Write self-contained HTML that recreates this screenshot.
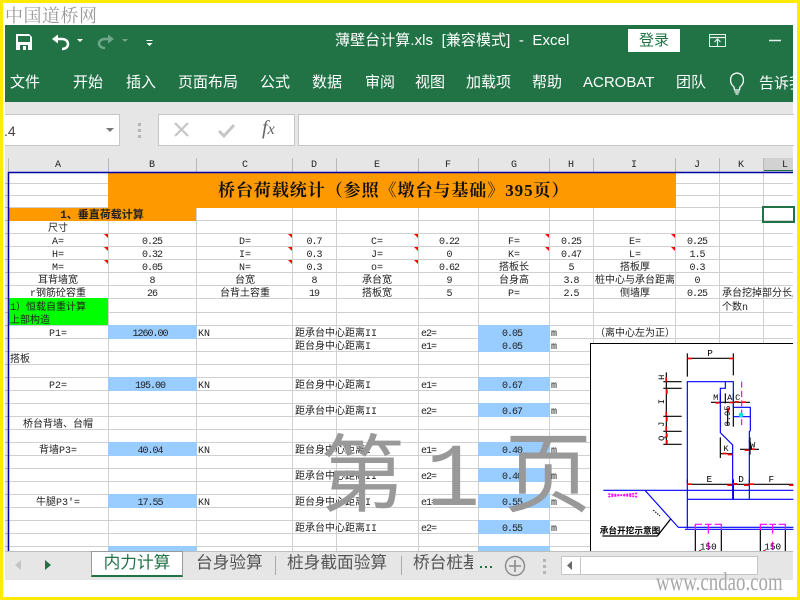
<!DOCTYPE html>
<html lang="zh"><head><meta charset="utf-8"><style>
html,body{margin:0;padding:0;background:#fff}
body{width:800px;height:600px;overflow:hidden;position:relative;font-family:"Liberation Sans","Noto Sans CJK SC",sans-serif}
.a{position:absolute;white-space:nowrap}
.m{color:#fff;font-size:15px;line-height:20px;top:73px}
svg{position:absolute;left:0;top:0}
.s text{font-family:"Liberation Mono","WenQuanYi Zen Hei","Noto Sans CJK SC",monospace;font-size:10px;fill:#222}
.s .c text{text-anchor:middle}
.s .n text,.s text.n{font-size:10px;letter-spacing:-1px}
</style></head><body>
<div class="a" style="left:5px;top:2px;font:18px 'Noto Serif CJK SC',serif;color:#999;letter-spacing:.5px">中国道桥网</div>
<div class="a" style="left:5px;top:25px;width:788px;height:77px;background:#217346"></div>
<div class="a" style="left:335px;top:31px;color:#fff;font-size:15px;line-height:20px;white-space:pre;letter-spacing:.07px">薄壁台计算.xls  [兼容模式]  -  Excel</div>
<div class="a" style="left:628px;top:29px;width:52px;height:23px;background:#fff;color:#217346;font-size:15px;line-height:23px;text-align:center">登录</div>
<div class="a m" style="left:10px">文件</div><div class="a m" style="left:73px">开始</div><div class="a m" style="left:126px">插入</div><div class="a m" style="left:178px">页面布局</div><div class="a m" style="left:260px">公式</div><div class="a m" style="left:312px">数据</div><div class="a m" style="left:365px">审阅</div><div class="a m" style="left:415px">视图</div><div class="a m" style="left:466px">加载项</div><div class="a m" style="left:532px">帮助</div><div class="a m" style="left:583px">ACROBAT</div><div class="a m" style="left:676px">团队</div><div class="a m" style="left:759px;top:74px;width:34px;overflow:hidden">告诉我</div>
<div class="a" style="left:5px;top:102px;width:788px;height:56px;background:#e6e6e6"></div>
<div class="a" style="left:5px;top:114px;width:114px;height:30px;background:#fff;border:1px solid #c6c6c6;border-left:0;font-size:14px;line-height:32px;color:#444;overflow:hidden;text-indent:-1px">.4</div>
<div class="a" style="left:158px;top:114px;width:135px;height:30px;background:#fff;border:1px solid #c6c6c6"></div>
<div class="a" style="left:298px;top:114px;width:495px;height:30px;background:#fff;border:1px solid #c6c6c6;border-right:0"></div>
<div class="a" style="left:262px;top:117px;font:italic 20px 'Liberation Serif',serif;color:#666">f<span style="font-size:16px">x</span></div>

<svg width="800" height="600" viewBox="0 0 800 600">
<!-- toolbar icons -->
<g fill="#fff">
<path fill-rule="evenodd" d="M16 34h13l3 3v13H16zM18 36v6h12v-6zM20 45v5h8v-5zM23 46h3v4h-3z"/>
<path d="M77 39h6l-3 3zM146.500 43h6l-3 3zM146.500 40h6v1h-6z"/>
</g>
<path d="M54 39h8c8 0 8 10 0 10" fill="none" stroke="#fff" stroke-width="2.500"/><path d="M52 39l6-4.500v9z" fill="#fff"/>
<path d="M112 39h-7c-8 0-8 9 0 9" fill="none" stroke="#6fa589" stroke-width="2.500"/><path d="M114 39l-6-4.500v9z" fill="#6fa589"/>
<path d="M122 39h6l-3 3z" fill="#6fa589"/>
<g fill="none" stroke="#e8f0ec"><rect x="709.500" y="34.500" width="16" height="12"/><path d="M709 37.500h17M717.500 46v-6M714.500 42l3-3 3 3" stroke-width="1.200"/><path d="M769 40.500h12" stroke-width="1.500"/></g>
<g fill="none" stroke="#fff" stroke-width="1.300"><path d="M734 87c-5-4-5-13 3-14 8 1 8 10 3 14l-.5 3h-5z"/><path d="M734.500 92h5M735.500 94h3"/></g>
<path d="M106 128h8l-4 4z" fill="#777"/>
<g fill="#b5b5b5"><rect x="138" y="123" width="3" height="3"/><rect x="138" y="129" width="3" height="3"/><rect x="138" y="135" width="3" height="3"/></g>
<path d="M175 123l13 13M188 123l-13 13" stroke="#c6c6c6" stroke-width="2.200" fill="none"/>
<path d="M219 131l5 5 10-11" stroke="#c6c6c6" stroke-width="3" fill="none"/>
</svg>

<svg class="s" width="800" height="600" viewBox="0 0 800 600">
<rect x="5" y="158" width="788" height="14" fill="#e6e6e6"/><rect x="5" y="172" width="3" height="379" fill="#e6e6e6"/>
<rect x="763" y="158" width="30" height="14" fill="#d2d2d2"/><rect x="763" y="170" width="30" height="1" fill="#217346"/>
<path stroke="#b9b9b9" fill="none" d="M8.500 158v14M108.500 158v14M196.500 158v14M292.500 158v14M336.500 158v14M418.500 158v14M478.500 158v14M549.500 158v14M593.500 158v14M675.500 158v14M719.500 158v14M763.500 158v14"/>
<path stroke="#b0b0b0" d="M5 183.500h3M5 195.500h3M5 207.500h3M5 220.500h3M5 233.500h3M5 246.500h3M5 259.500h3M5 272.500h3M5 285.500h3M5 298.500h3M5 312.500h3M5 325.500h3M5 338.500h3M5 351.500h3M5 364.500h3M5 377.500h3M5 390.500h3M5 403.500h3M5 416.500h3M5 429.500h3M5 442.500h3M5 455.500h3M5 468.500h3M5 481.500h3M5 494.500h3M5 507.500h3M5 520.500h3M5 533.500h3M5 546.500h3"/>
<path stroke="#d0d0d0" fill="none" d="M108.500 172V551M196.500 172V551M292.500 172V551M336.500 172V551M418.500 172V551M478.500 172V551M549.500 172V551M593.500 172V551M675.500 172V551M719.500 172V551M763.500 172V551M8 183.500H793M8 195.500H793M8 207.500H793M8 220.500H793M8 233.500H793M8 246.500H793M8 259.500H793M8 272.500H793M8 285.500H793M8 298.500H793M8 312.500H793M8 325.500H793M8 338.500H793M8 351.500H793M8 364.500H793M8 377.500H793M8 390.500H793M8 403.500H793M8 416.500H793M8 429.500H793M8 442.500H793M8 455.500H793M8 468.500H793M8 481.500H793M8 494.500H793M8 507.500H793M8 520.500H793M8 533.500H793M8 546.500H793"/>
<rect x="108" y="172" width="568" height="36" fill="#ff9900"/><rect x="8" y="208" width="188" height="13" fill="#ff9900"/><rect x="8" y="298" width="100" height="27" fill="#00ff00"/>
<g fill="#99ccff"><rect x="108" y="325" width="89" height="14"/><rect x="108" y="377" width="89" height="14"/><rect x="108" y="442" width="89" height="14"/><rect x="108" y="494" width="89" height="14"/><rect x="108" y="546" width="89" height="6"/><rect x="478" y="325" width="72" height="27"/><rect x="478" y="377" width="72" height="14"/><rect x="478" y="403" width="72" height="14"/><rect x="478" y="442" width="72" height="14"/><rect x="478" y="468" width="72" height="14"/><rect x="478" y="494" width="72" height="14"/><rect x="478" y="520" width="72" height="14"/><rect x="478" y="546" width="72" height="6"/></g>
<path d="M8 172.500H793M8.500 172V551" stroke="#0000a8" stroke-width="1.500" fill="none"/>
<rect x="763" y="207" width="31" height="15" fill="none" stroke="#217346" stroke-width="2"/>
<g fill="#f00"><path d="M104 234h4v4zM104 247h4v4zM104 260h4v4zM288 234h4v4zM288 247h4v4zM288 260h4v4zM414 234h4v4zM414 247h4v4zM414 260h4v4zM545 234h4v4zM545 247h4v4zM671 234h4v4zM671 247h4v4z"/></g>

<text x="218" y="196" style="font-family:'Liberation Serif','Noto Serif CJK SC',serif;font-size:17px;font-weight:bold;fill:#111;letter-spacing:.95px">桥台荷载统计（参照《墩台与基础》395页）</text>

<g class="c">
<g><text x="58" y="167">A</text><text x="152" y="167">B</text><text x="245" y="167">C</text><text x="314" y="167">D</text><text x="377" y="167">E</text><text x="448" y="167">F</text><text x="514" y="167">G</text><text x="571" y="167">H</text><text x="634" y="167">I</text><text x="697" y="167">J</text><text x="741" y="167">K</text><text x="785" y="167">L</text></g>
<text x="102" y="218" font-weight="bold" style="font-size:11px">1、垂直荷载计算</text>
<text x="58" y="231">尺寸</text>
<text x="58" y="244">A=</text><text x="245" y="244">D=</text><text x="377" y="244">C=</text><text x="514" y="244">F=</text><text x="635" y="244">E=</text>
<text x="58" y="257">H=</text><text x="245" y="257">I=</text><text x="377" y="257">J=</text><text x="514" y="257">K=</text><text x="635" y="257">L=</text>
<text x="58" y="270">M=</text><text x="245" y="270">N=</text><text x="377" y="270">o=</text><text x="514" y="270">搭板长</text><text x="635" y="270">搭板厚</text>
<text x="58" y="283">耳背墙宽</text><text x="245" y="283">台宽</text><text x="377" y="283">承台宽</text><text x="514" y="283">台身高</text><text x="635" y="283">桩中心与承台距离</text>
<text x="58" y="296">r钢筋砼容重</text><text x="245" y="296">台背土容重</text><text x="377" y="296">搭板宽</text><text x="514" y="296">P=</text><text x="635" y="296">侧墙厚</text>
<g class="n">
<text x="152" y="244">0.25</text><text x="314" y="244">0.7</text><text x="449" y="244">0.22</text><text x="571" y="244">0.25</text><text x="697" y="244">0.25</text>
<text x="152" y="257">0.32</text><text x="314" y="257">0.3</text><text x="449" y="257">0</text><text x="571" y="257">0.47</text><text x="697" y="257">1.5</text>
<text x="152" y="270">0.05</text><text x="314" y="270">0.3</text><text x="449" y="270">0.62</text><text x="571" y="270">5</text><text x="697" y="270">0.3</text>
<text x="152" y="283">8</text><text x="314" y="283">8</text><text x="449" y="283">9</text><text x="571" y="283">3.8</text><text x="697" y="283">0</text>
<text x="152" y="296">26</text><text x="314" y="296">19</text><text x="449" y="296">5</text><text x="571" y="296">2.5</text><text x="697" y="296">0.25</text>
<text x="150" y="336">1260.00</text><text x="150" y="388">195.00</text><text x="150" y="453">40.04</text><text x="150" y="505">17.55</text>
<text x="512" y="336">0.05</text><text x="512" y="349">0.05</text><text x="512" y="388">0.67</text><text x="512" y="414">0.67</text><text x="512" y="453">0.40</text><text x="512" y="479">0.40</text><text x="512" y="505">0.55</text><text x="512" y="531">0.55</text>
</g>
<text x="58" y="336">P1=</text><text x="58" y="388">P2=</text><text x="58" y="427">桥台背墙、台帽</text><text x="58" y="453">背墙P3=</text><text x="58" y="505">牛腿P3'=</text>
</g>
<text x="10" y="310">1）恒载自重计算</text><text x="10" y="323">上部构造</text><text x="10" y="362">搭板</text>
<svg x="720" y="286" width="73" height="30" overflow="hidden"><text x="2" y="10">承台挖掉部分长度</text><text x="2" y="24">个数n</text></svg>
<text x="198" y="336">KN</text><text x="198" y="388">KN</text><text x="198" y="453">KN</text><text x="198" y="505">KN</text>
<text x="295" y="336">距承台中心距离II</text><text x="295" y="349">距台身中心距离I</text><text x="295" y="388">距台身中心距离I</text><text x="295" y="414">距承台中心距离II</text><text x="295" y="453">距台身中心距离I</text><text x="295" y="479">距承台中心距离II</text><text x="295" y="505">距台身中心距离I</text><text x="295" y="531">距承台中心距离II</text>
<g class="n"><text x="421" y="336">e2=</text><text x="421" y="349">e1=</text><text x="421" y="388">e1=</text><text x="421" y="414">e2=</text><text x="421" y="453">e1=</text><text x="421" y="479">e2=</text><text x="421" y="505">e1=</text><text x="421" y="531">e2=</text>
<text x="551" y="336">m</text><text x="551" y="349">m</text><text x="551" y="388">m</text><text x="551" y="414">m</text><text x="551" y="453">m</text><text x="551" y="479">m</text><text x="551" y="505">m</text><text x="551" y="531">m</text></g>
<text x="595" y="336">（离中心左为正）</text>

<!-- picture -->
<rect x="590" y="343" width="203" height="208" fill="#fff"/>
<path d="M590.500 551V343.500H793" fill="none" stroke="#000"/>
<g transform="translate(590 340) scale(.33333)" fill="none" stroke-width="3.500">
<g stroke="#000">
<path d="M292 40v70M430 40v66M292 55h138M229 97v218M220 125h55M220 145h55M220 229h55M220 274h55M220 313h55M292 418v15M292 433H610M430 418v60M478 418v15M363 187h117M391 160v30M406 160v30M430 160v100M391 292v62M391 341h36M450 328h57M480 292v52M413 205v50" />
<path d="M242 537l-40 51H37" stroke-width="4"/>
<path d="M190 510l20 18" stroke-dasharray="4 4"/>
<path d="M316 570v65M394 570v65M511 570v65M586 570v65"/>
<path d="M478 300l6 25-4 0z" fill="#000"/>
</g>
<g stroke="#0000ff">
<path d="M292 565V125H430V202H481V272L478 275V478M406 125V145H391V278L428 315V478M40 451H610M292 478H610M430 230H481M165 451L265 562H285M285 562H610M285 568H610"/>
</g>
<g stroke="#f0f" >
<path d="M455 125v136" stroke-dasharray="18 10"/>
<path d="M316 570v-17h20M394 570v-17h-20M355 553v28M345 553h20M511 570v-17h20M586 570v-17h-20M548 553v28M538 553h20M355 605v25M548 605v25"/>
<path d="M55 470l86-10M55 462l86 8" stroke-width="5" stroke-dasharray="6 3"/>
</g>
<g fill="#f00"><rect x="292" y="53" width="14" height="5"/><rect x="417" y="53" width="14" height="5"/><rect x="226" y="112" width="5" height="13"/><rect x="228" y="148" width="5" height="14"/><rect x="226" y="215" width="5" height="12"/><rect x="228" y="231" width="5" height="13"/><rect x="226" y="260" width="5" height="14"/><rect x="228" y="280" width="5" height="12"/><rect x="228" y="300" width="5" height="13"/><rect x="292" y="430" width="14" height="5"/><rect x="412" y="433" width="14" height="5"/><rect x="428" y="429" width="14" height="5"/><rect x="462" y="433" width="14" height="5"/><rect x="478" y="430" width="14" height="5"/><rect x="597" y="433" width="13" height="5"/><rect x="376" y="186" width="12" height="5"/><rect x="418" y="185" width="12" height="5"/><rect x="434" y="183" width="12" height="5"/><rect x="456" y="184" width="12" height="5"/><rect x="413" y="203" width="5" height="12"/><rect x="398" y="338" width="12" height="5"/><rect x="413" y="341" width="14" height="5"/><rect x="464" y="328" width="12" height="5"/><rect x="486" y="325" width="8" height="5"/><rect x="327" y="630" width="6" height="4"/><rect x="520" y="630" width="6" height="4"/></g>
<circle cx="453" cy="225" r="7" fill="#00e5e5"/>
<g style="font-family:'Liberation Mono','WenQuanYi Zen Hei','Noto Sans CJK SC',monospace" fill="#000" stroke="none" text-anchor="middle">
<text x="360" y="48" style="font-size:28px;fill:#000">P</text><text x="358" y="426" style="font-size:28px;fill:#000">E</text><text x="453" y="426" style="font-size:28px;fill:#000">D</text><text x="544" y="426" style="font-size:28px;fill:#000">F</text>
<text x="377" y="180" style="font-size:26px;fill:#000">M</text><text x="419" y="180" style="font-size:26px;fill:#000">A</text><text x="443" y="180" style="font-size:26px;fill:#000">C</text><text x="408" y="333" style="font-size:26px;fill:#000">K</text><text x="488" y="322" style="font-size:26px;fill:#000">W</text>
<text x="355" y="628" style="font-size:28px;fill:#000">150</text><text x="548" y="628" style="font-size:28px;fill:#000">150</text>
<text transform="translate(222 112) rotate(-90)" style="font-size:26px;fill:#000">H</text><text transform="translate(222 185) rotate(-90)" style="font-size:26px;fill:#000">I</text><text transform="translate(222 253) rotate(-90)" style="font-size:26px;fill:#000">J</text><text transform="translate(222 295) rotate(-90)" style="font-size:26px;fill:#000">Q</text>
<text transform="translate(420 228) rotate(-90)" style="font-size:26px;fill:#000">0.95</text>
<text x="120" y="580" style="font-size:26px;fill:#000;font-weight:bold">承台开挖示意图</text>
</g>
</g>

<!-- page watermark -->
<text x="320" y="505" style="font-family:'Noto Sans CJK SC',sans-serif;font-size:85px;fill:#999">第</text>
<text x="453" y="505" text-anchor="middle" style="font-family:'Liberation Mono',monospace;font-size:90px;fill:#999">1</text>
<text x="504" y="505" style="font-family:'Noto Sans CJK SC',sans-serif;font-size:88px;fill:#999">页</text>
</svg>

<!-- bottom -->
<div class="a" style="left:5px;top:551px;width:788px;height:29px;background:#e6e6e6;border-top:1px solid #bdbdbd;box-sizing:border-box"></div>
<div class="a" style="left:91px;top:551px;width:92px;height:26px;background:#fff;border:1px solid #9a9a9a;border-bottom:2px solid #217346;box-sizing:border-box;color:#217346;font-size:16.700px;line-height:22px;text-align:center">内力计算</div>
<div class="a" style="left:196px;top:551px;color:#555;font-size:16.700px;line-height:24px">台身验算</div>
<div class="a" style="left:275px;top:556px;width:1px;height:19px;background:#aaa"></div>
<div class="a" style="left:287px;top:551px;color:#555;font-size:16.700px;line-height:24px">桩身截面验算</div>
<div class="a" style="left:401px;top:556px;width:1px;height:19px;background:#aaa"></div>
<div class="a" style="left:413px;top:551px;width:60px;overflow:hidden;color:#555;font-size:16.700px;line-height:24px">桥台桩基</div>
<svg width="800" height="600" viewBox="0 0 800 600">
<path d="M21 560v10l-6-5z" fill="#c4c4c4"/><path d="M45 560v10l6-5z" fill="#217346"/>
<g fill="#217346"><rect x="480" y="566" width="2" height="2"/><rect x="485" y="566" width="2" height="2"/><rect x="490" y="566" width="2" height="2"/></g>
<circle cx="515" cy="566" r="9.500" fill="none" stroke="#8a8a8a" stroke-width="1.400"/><path d="M515 560v12M509 566h12" stroke="#8a8a8a" stroke-width="1.600"/>
<g fill="#b5b5b5"><rect x="543" y="559" width="3" height="3"/><rect x="543" y="565" width="3" height="3"/><rect x="543" y="571" width="3" height="3"/></g>
<rect x="561.500" y="556.500" width="19" height="18" fill="#fff" stroke="#c6c6c6"/><path d="M572 561v9l-5-4.500z" fill="#666"/>
<rect x="580.500" y="556.500" width="177" height="18" fill="#fff" stroke="#c6c6c6"/>
</svg>
<div class="a" style="left:656px;top:570px;font:25px/26px 'Liberation Serif',serif;color:#a8a8a8;transform:scaleX(.755);transform-origin:0 0;letter-spacing:0">www.cndao.com</div>

<div class="a" style="left:0;top:0;width:800px;height:3px;background:#ffea00"></div>
<div class="a" style="left:0;top:0;width:3px;height:600px;background:#ffea00"></div>
<div class="a" style="left:797px;top:0;width:3px;height:600px;background:#ffea00"></div>
<div class="a" style="left:0;top:597px;width:800px;height:3px;background:#ffea00"></div>
</body></html>
